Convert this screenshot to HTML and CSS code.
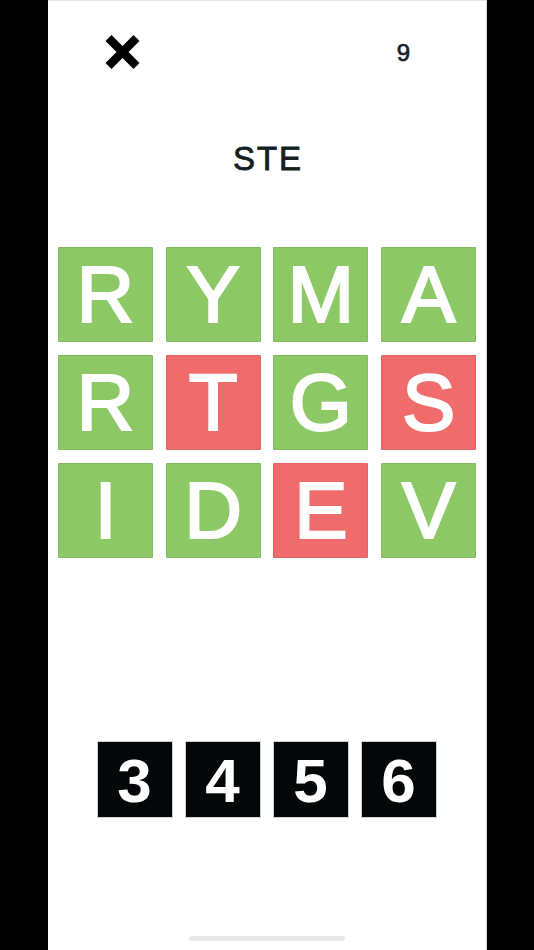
FILE: index.html
```html
<!DOCTYPE html>
<html>
<head>
<meta charset="utf-8">
<link rel="stylesheet" href="styles.css">
</head>
<body>
<div class="phone">
  <div class="header">
    <svg class="close" width="35" height="34" viewBox="0 0 35 34">
      <line x1="3.5" y1="3" x2="31.5" y2="31" stroke="#000" stroke-width="8.5"/>
      <line x1="31.5" y1="3" x2="3.5" y2="31" stroke="#000" stroke-width="8.5"/>
    </svg>
    <div class="count">9</div>
  </div>
  <div class="title">STE</div>
  <div class="grid">
    <div class="tile green">R</div>
    <div class="tile green">Y</div>
    <div class="tile green">M</div>
    <div class="tile green">A</div>
    <div class="tile green">R</div>
    <div class="tile red">T</div>
    <div class="tile green">G</div>
    <div class="tile red">S</div>
    <div class="tile green">I</div>
    <div class="tile green">D</div>
    <div class="tile red">E</div>
    <div class="tile green">V</div>
  </div>
  <div class="digits">
    <div class="digit">3</div>
    <div class="digit">4</div>
    <div class="digit">5</div>
    <div class="digit">6</div>
  </div>
  <div class="home-bar"></div>
</div>
</body>
</html>
```
FILE: styles.css
```css
html, body {
  margin: 0;
  padding: 0;
  background: #000;
}
body {
  width: 534px;
  height: 950px;
  overflow: hidden;
  font-family: "Liberation Sans", Arial, sans-serif;
}
.phone {
  width: 439px;
  height: 950px;
  margin-left: 48px;
  background: #fff;
  border-top: 1px solid #e6e6e6;
  border-right: 1px solid #d8d8d8;
  box-sizing: border-box;
  display: flex;
  flex-direction: column;
  position: relative;
}
.header {
  height: 103px;
  display: flex;
  align-items: center;
  justify-content: space-between;
  padding: 0 76px 0 57px;
}
.close {
  display: block;
  margin-top: -1px;
}
.count {
  font-size: 24px;
  font-weight: 400;
  -webkit-text-stroke: 0.7px #1b2327;
  color: #1b2327;
}
.title {
  margin-top: 35px;
  height: 40px;
  line-height: 40px;
  text-align: center;
  font-size: 33px;
  font-weight: 400;
  -webkit-text-stroke: 0.8px #13201f;
  letter-spacing: 2px;
  padding-left: 2px;
  color: #13201f;
}
.grid {
  margin: 68px 10px 0 10px;
  display: grid;
  grid-template-columns: repeat(4, 95px);
  grid-auto-rows: 95px;
  column-gap: 12.7px;
  row-gap: 13px;
}
.tile {
  display: flex;
  align-items: center;
  justify-content: center;
  color: #fff;
  font-size: 80px;
  font-weight: 400;
  -webkit-text-stroke: 2.2px #fff;
  border: 1px solid rgba(0, 0, 0, 0.06);
  box-sizing: border-box;
  border-radius: 1px;
  padding-top: 1px;
}
.green {
  background: #8cc866;
}
.red {
  background: #f06b6c;
}
.digits {
  margin-top: 183px;
  display: flex;
  justify-content: center;
  gap: 12px;
  padding-right: 1px;
}
.digit {
  width: 76px;
  height: 77px;
  background: #030707;
  color: #fff;
  font-size: 62px;
  font-weight: 700;
  display: flex;
  align-items: center;
  justify-content: center;
  border: 1px solid #cfcfcf;
  box-sizing: border-box;
  padding-top: 2px;
}
.home-bar {
  margin: 118px auto 0;
  width: 156px;
  height: 5px;
  border-radius: 3px;
  background: #e6e7e9;
}
```
